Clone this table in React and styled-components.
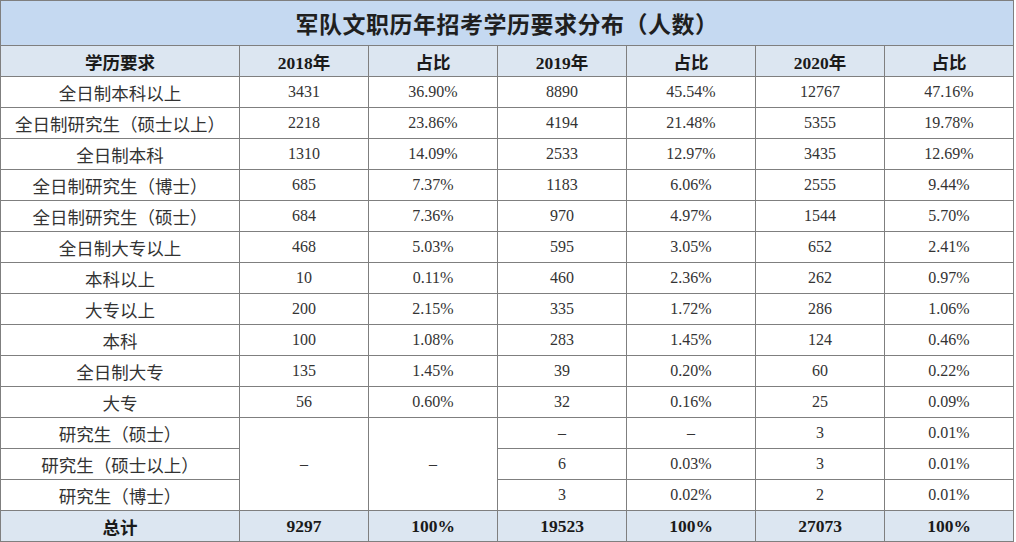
import React from 'react';
import styled, { createGlobalStyle } from 'styled-components';

const GlobalStyle = createGlobalStyle`
    html, body {
        margin: 0;
        padding: 0;
        background: #ffffff;
    }
`;

const Table = styled.table`
    width: 1013px;
    border-collapse: collapse;
    table-layout: fixed;
    font-family: "Liberation Serif", "Noto Sans CJK SC", serif;
    color: #2b2b2b;
`;

const TitleCell = styled.th`
    height: 44px;
    padding: 0;
    background: #c5d9f1;
    border: 1px solid #7f7f7f;
    font-family: "Noto Sans CJK SC", sans-serif;
    font-size: 23px;
    font-weight: 700;
    color: #1f1f1f;
    text-align: center;
    letter-spacing: 0.5px;
`;

const Row = styled.tr`
    height: 31px;
    background: ${props => props.shaded ? '#dce6f1' : '#ffffff'};
`;

const Cell = styled.td`
    padding: 0;
    border: 1px solid #7f7f7f;
    text-align: center;
    vertical-align: middle;
    white-space: nowrap;
    font-family: ${props => props.cn
        ? '"Noto Sans CJK SC", sans-serif'
        : '"Liberation Serif", "Noto Sans CJK SC", serif'};
    font-size: ${props => props.bold ? '17.5px' : props.cn ? '17.5px' : '16px'};
    font-weight: ${props => props.bold ? 700 : 400};
    color: ${props => props.bold ? '#1a1a1a' : '#333333'};
`;

const YearMark = styled.span`
    font-family: "Noto Sans CJK SC", sans-serif;
`;

const widths = [239, 129, 129, 129, 129, 129, 129];

const rows = [
    ['全日制本科以上', '3431', '36.90%', '8890', '45.54%', '12767', '47.16%'],
    ['全日制研究生（硕士以上）', '2218', '23.86%', '4194', '21.48%', '5355', '19.78%'],
    ['全日制本科', '1310', '14.09%', '2533', '12.97%', '3435', '12.69%'],
    ['全日制研究生（博士）', '685', '7.37%', '1183', '6.06%', '2555', '9.44%'],
    ['全日制研究生（硕士）', '684', '7.36%', '970', '4.97%', '1544', '5.70%'],
    ['全日制大专以上', '468', '5.03%', '595', '3.05%', '652', '2.41%'],
    ['本科以上', '10', '0.11%', '460', '2.36%', '262', '0.97%'],
    ['大专以上', '200', '2.15%', '335', '1.72%', '286', '1.06%'],
    ['本科', '100', '1.08%', '283', '1.45%', '124', '0.46%'],
    ['全日制大专', '135', '1.45%', '39', '0.20%', '60', '0.22%'],
    ['大专', '56', '0.60%', '32', '0.16%', '25', '0.09%'],
];

const tailRows = [
    ['研究生（硕士）', '–', '–', '3', '0.01%'],
    ['研究生（硕士以上）', '6', '0.03%', '3', '0.01%'],
    ['研究生（博士）', '3', '0.02%', '2', '0.01%'],
];

export default function App() {
    return (
        <>
            <GlobalStyle />
            <Table>
                <colgroup>
                    {widths.map((w, i) => <col key={i} style={{ width: w }} />)}
                </colgroup>
                <thead>
                    <tr>
                        <TitleCell colSpan={7}>军队文职历年招考学历要求分布（人数）</TitleCell>
                    </tr>
                    <Row shaded>
                        <Cell cn bold>学历要求</Cell>
                        <Cell bold>2018<YearMark>年</YearMark></Cell>
                        <Cell cn bold>占比</Cell>
                        <Cell bold>2019<YearMark>年</YearMark></Cell>
                        <Cell cn bold>占比</Cell>
                        <Cell bold>2020<YearMark>年</YearMark></Cell>
                        <Cell cn bold>占比</Cell>
                    </Row>
                </thead>
                <tbody>
                    {rows.map(r => (
                        <Row key={r[0]}>
                            <Cell cn>{r[0]}</Cell>
                            {r.slice(1).map((v, i) => <Cell key={i}>{v}</Cell>)}
                        </Row>
                    ))}
                    {tailRows.map((r, idx) => (
                        <Row key={r[0]}>
                            <Cell cn>{r[0]}</Cell>
                            {idx === 0 && <Cell rowSpan={3}>–</Cell>}
                            {idx === 0 && <Cell rowSpan={3}>–</Cell>}
                            {r.slice(1).map((v, i) => <Cell key={i}>{v}</Cell>)}
                        </Row>
                    ))}
                    <Row shaded>
                        <Cell cn bold>总计</Cell>
                        <Cell bold>9297</Cell>
                        <Cell bold>100%</Cell>
                        <Cell bold>19523</Cell>
                        <Cell bold>100%</Cell>
                        <Cell bold>27073</Cell>
                        <Cell bold>100%</Cell>
                    </Row>
                </tbody>
            </Table>
        </>
    );
}
